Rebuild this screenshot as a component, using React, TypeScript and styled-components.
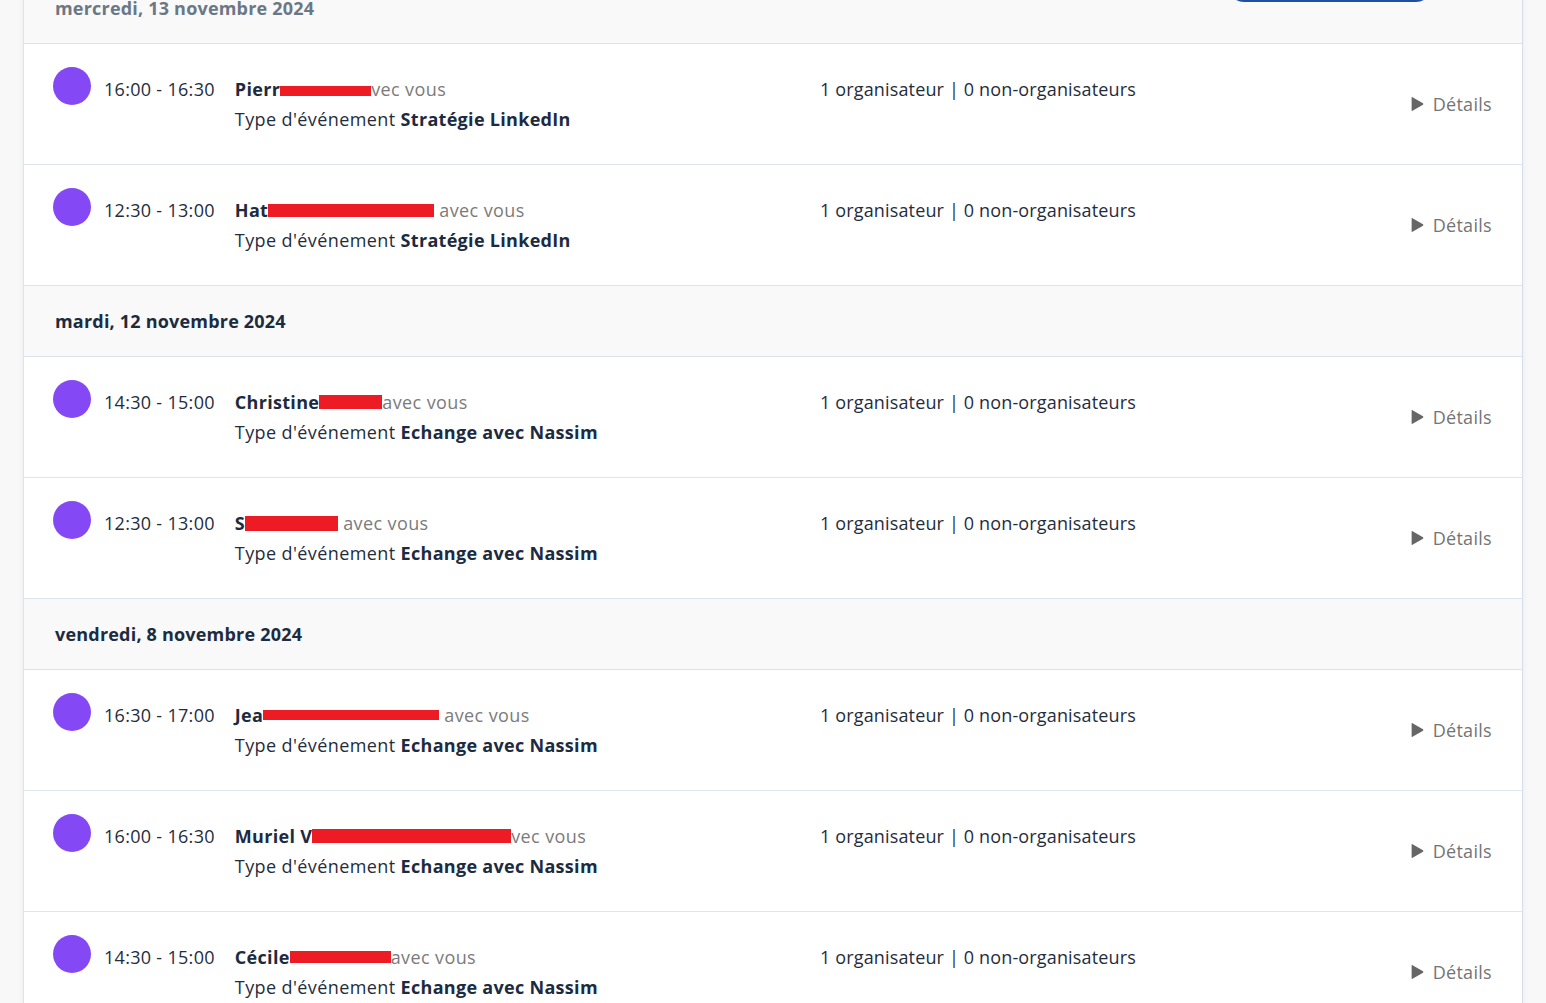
import React from "react";
import styled, { createGlobalStyle } from "styled-components";

const GlobalStyle = createGlobalStyle`
  html, body { margin: 0; padding: 0; background: #f8f8f8; }
  body { font-family: "Open Sans", "Lato", sans-serif; overflow: hidden; }
  * { box-sizing: border-box; }
`;

const Page = styled.div`
  position: relative;
  padding: 0 23px;
  margin-top: -27px;
  height: 1030px;
`;

const TopButton = styled.div`
  position: absolute;
  top: -31px;
  left: 1228px;
  width: 204px;
  height: 33px;
  border: 2px solid #1f4fa3;
  border-radius: 16px;
  background: #ffffff;
  z-index: 2;
`;

const Card = styled.div`
  background: #ffffff;
  border-left: 1px solid #dbe3ee;
  border-right: 1px solid #d3ddec;
  box-shadow: 0 0 6px rgba(30, 50, 90, 0.06);
`;

const DateHeader = styled.div<{ $faded?: boolean }>`
  height: 71px;
  display: flex;
  align-items: center;
  padding-left: 31px;
  background: #f9f9f9;
  border-bottom: 1px solid #dae2eb;
  font-size: 18px;
  font-weight: 700;
  letter-spacing: 0.2px;
  color: ${(p) => (p.$faded ? "#6c7785" : "#1c2b40")};
`;

const Row = styled.div`
  height: 121px;
  display: grid;
  grid-template-columns: 767px 1fr auto;
  align-items: start;
  padding: 30px 30px 0 29px;
  border-bottom: 1px solid #dde4ec;
`;

const Left = styled.div`
  display: flex;
  align-items: flex-start;
`;

const Avatar = styled.div`
  width: 38px;
  height: 38px;
  border-radius: 50%;
  background: #8449f4;
  margin-top: -7px;
  flex-shrink: 0;
`;

const Time = styled.div`
  margin-left: 13px;
  margin-right: 20px;
  font-size: 18px;
  letter-spacing: 0.3px;
  line-height: 30px;
  color: #1f2d3d;
  white-space: nowrap;
`;

const Info = styled.div`
  font-size: 18px;
  letter-spacing: 0.4px;
  line-height: 30px;
  color: #1f2d3d;
  white-space: nowrap;
`;

const Name = styled.span`
  font-weight: 700;
  letter-spacing: 0.3px;
  color: #1c2b40;
`;

const Muted = styled.span`
  color: #7b7b7b;
`;

const Bold = styled.span`
  font-weight: 700;
  letter-spacing: 0.3px;
  color: #1c2b40;
`;

const Redact = styled.span<{ $w: number; $h: number; $v: number }>`
  display: inline-block;
  width: ${(p) => p.$w}px;
  height: ${(p) => p.$h}px;
  background: #ed1c24;
  vertical-align: ${(p) => p.$v}px;
`;

const Org = styled.div`
  font-size: 18px;
  letter-spacing: 0.15px;
  line-height: 30px;
  color: #1f2d3d;
  white-space: nowrap;
`;

const Details = styled.div`
  align-self: center;
  margin-top: -30px;
  display: flex;
  align-items: center;
  gap: 9px;
  font-size: 18px;
  letter-spacing: 0.3px;
  color: #747474;
`;

type Ev = {
  time: string;
  prefix: string;
  w: number;
  h: number;
  v: number;
  suffix: string;
  type: string;
};

type Group = { date: string; faded?: boolean; events: Ev[] };

const groups: Group[] = [
  {
    date: "mercredi, 13 novembre 2024",
    faded: true,
    events: [
      { time: "16:00 - 16:30", prefix: "Pierr", w: 91, h: 10, v: 0, suffix: "vec vous", type: "Stratégie LinkedIn" },
      { time: "12:30 - 13:00", prefix: "Hat", w: 166, h: 13, v: 0, suffix: " avec vous", type: "Stratégie LinkedIn" },
    ],
  },
  {
    date: "mardi, 12 novembre 2024",
    events: [
      { time: "14:30 - 15:00", prefix: "Christine", w: 63, h: 14, v: 0, suffix: "avec vous", type: "Echange avec Nassim" },
      { time: "12:30 - 13:00", prefix: "S", w: 93, h: 15, v: -1, suffix: " avec vous", type: "Echange avec Nassim" },
    ],
  },
  {
    date: "vendredi, 8 novembre 2024",
    events: [
      { time: "16:30 - 17:00", prefix: "Jea", w: 176, h: 10, v: 2, suffix: " avec vous", type: "Echange avec Nassim" },
      { time: "16:00 - 16:30", prefix: "Muriel V", w: 199, h: 14, v: 0, suffix: "vec vous", type: "Echange avec Nassim" },
      { time: "14:30 - 15:00", prefix: "Cécile", w: 101, h: 12, v: 1, suffix: "avec vous", type: "Echange avec Nassim" },
    ],
  },
];

const Triangle = () => (
  <svg width="13" height="16" viewBox="0 0 13 16">
    <path d="M1.5 1.2 L12 7.3 Q12.8 8 12 8.7 L1.5 14.8 Q0.6 15.2 0.6 14.2 L0.6 1.8 Q0.6 0.8 1.5 1.2 Z" fill="#666666" />
  </svg>
);

export default function App() {
  return (
    <>
      <GlobalStyle />
      <TopButton />
      <Page>
        <Card>
          {groups.map((g) => (
            <React.Fragment key={g.date}>
              <DateHeader $faded={g.faded}>{g.date}</DateHeader>
              {g.events.map((e, i) => (
                <Row key={i}>
                  <Left>
                    <Avatar />
                    <Time>{e.time}</Time>
                    <Info>
                      <div>
                        <Name>{e.prefix}</Name>
                        <Redact $w={e.w} $h={e.h} $v={e.v} />
                        <Muted>{e.suffix}</Muted>
                      </div>
                      <div>
                        Type d'événement <Bold>{e.type}</Bold>
                      </div>
                    </Info>
                  </Left>
                  <Org>1 organisateur | 0 non-organisateurs</Org>
                  <Details>
                    <Triangle />
                    <span>Détails</span>
                  </Details>
                </Row>
              ))}
            </React.Fragment>
          ))}
        </Card>
      </Page>
    </>
  );
}
